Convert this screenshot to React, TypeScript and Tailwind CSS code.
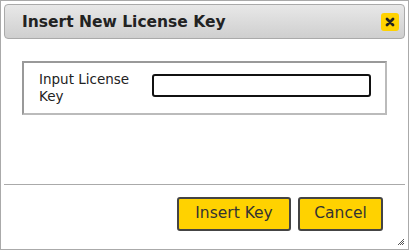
import React from "react";

export default function App() {
  return (
    <div
      className="w-[409px] h-[250px] bg-white border border-[#aaaaaa] relative flex flex-col"
      style={{ fontFamily: '"DejaVu Sans", Verdana, sans-serif' }}
    >
      <div className="mx-[3px] mt-[3px] h-[35px] rounded-[4px] border border-[#aaaaaa] bg-gradient-to-b from-[#e8e8e8] to-[#cfcfcf] flex items-center pl-[17px] pr-[5px]">
        <div className="flex-1 text-[15.5px] font-bold text-[#222222] pt-[2px]">Insert New License Key</div>
        <div className="w-[18px] h-[18px] rounded-[3px] bg-[#ffd200] flex items-center justify-center mt-[1px]">
          <svg width="10" height="10" viewBox="0 0 10 10">
            <path d="M2 2 L8 8 M8 2 L2 8" stroke="#222" strokeWidth="2.8" strokeLinecap="round" />
          </svg>
        </div>
      </div>
      <div className="flex-1 px-[21px] pt-[22px]">
        <div className="h-[54px] border-2 border-t-[#999999] border-l-[#999999] border-r-[#bbbbbb] border-b-[#bbbbbb] flex items-start pl-[15px] pt-[8px]">
          <div className="w-[113px] text-[13.5px] leading-[17px] text-[#222222]">Input License Key</div>
          <div className="w-[219px] h-[23px] mt-[3px] border-2 border-[#111111] rounded-[3px] bg-white" />
        </div>
      </div>
      <div className="mx-[3px] border-t border-[#aaaaaa] flex justify-end gap-[7px] pt-[12px] pb-[18px] pr-[22px]">
        <button className="w-[114px] h-[34px] bg-[#ffd200] border-2 border-[#444444] rounded-[3px] text-[15.5px] text-[#333333]">
          Insert Key
        </button>
        <button className="w-[85px] h-[34px] bg-[#ffd200] border-2 border-[#444444] rounded-[3px] text-[15.5px] text-[#333333]">
          Cancel
        </button>
      </div>
      <svg className="absolute right-[3px] bottom-[3px]" width="8" height="8" viewBox="0 0 8 8">
        <path d="M7 1 L1 7 M7 3 L3 7 M7 5 L5 7" stroke="#555" strokeWidth="1" />
      </svg>
    </div>
  );
}
